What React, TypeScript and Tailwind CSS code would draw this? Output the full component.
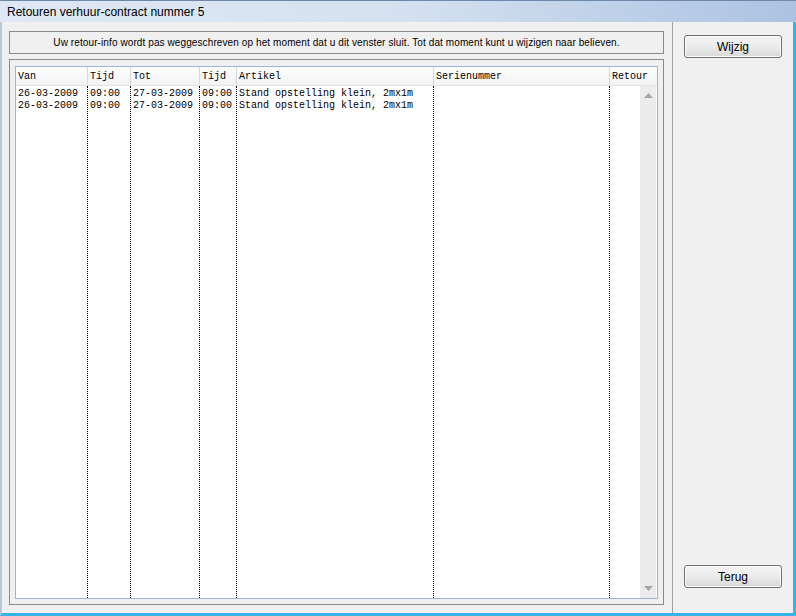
const rows = [
  { van: '26-03-2009', tijd: '09:00', tot: '27-03-2009', tijd2: '09:00', artikel: 'Stand opstelling klein, 2mx1m', serie: '', retour: '' },
  { van: '26-03-2009', tijd: '09:00', tot: '27-03-2009', tijd2: '09:00', artikel: 'Stand opstelling klein, 2mx1m', serie: '', retour: '' },
];

const cols = [
  { key: 'van', label: 'Van', w: 'w-[72px]' },
  { key: 'tijd', label: 'Tijd', w: 'w-[43px]' },
  { key: 'tot', label: 'Tot', w: 'w-[69px]' },
  { key: 'tijd2', label: 'Tijd', w: 'w-[37px]' },
  { key: 'artikel', label: 'Artikel', w: 'w-[197px]' },
  { key: 'serie', label: 'Serienummer', w: 'w-[176px]' },
] as const;

const mono = { fontFamily: '"Liberation Mono", monospace' };

function Button({ label }: { label: string }) {
  return (
    <button className="w-[98px] h-[23px] rounded-[3px] border border-[#707070] bg-gradient-to-b from-[#f4f4f4] via-[#ebebeb] to-[#d8d8d8] text-[12px] text-black shadow-[inset_0_0_0_1px_#fcfcfc]">
      {label}
    </button>
  );
}

export default function App() {
  return (
    <div className="w-[796px] h-[616px] flex flex-col bg-[#f0f0f0] overflow-hidden" style={{ fontFamily: '"Liberation Sans", Arial, sans-serif' }}>
      <div className="h-[22px] shrink-0 flex items-center pl-[7px] bg-gradient-to-r from-[#dfe8f4] via-[#d5e1f0] to-[#abc3e2] border-t border-[#6d88a8] text-[12px] text-black">
        Retouren verhuur-contract nummer 5
      </div>
      <div className="flex-1 flex border-l-2 border-l-[#b7c7dc] border-r-[3px] border-r-[#36b5e5] border-b-[3px] border-b-[#36b5e5] min-h-0">
        <div className="w-[670px] flex flex-col pt-[9px] pb-[8px] pl-[7px] pr-[8px]">
          <div className="h-[23px] shrink-0 border border-[#8a8a8a] flex items-center justify-center text-[10px] text-black tracking-[0.1px]">
            Uw retour-info wordt pas weggeschreven op het moment dat u dit venster sluit. Tot dat moment kunt u wijzigen naar believen.
          </div>
          <div className="mt-[5px] flex-1 border border-[#8a8a8a] p-[5px] pt-[6px] flex min-h-0">
            <div className="flex-1 border border-[#99b4e1] bg-white flex flex-col text-[10px] text-black min-h-0" style={mono}>
              <div className="h-[19px] shrink-0 flex bg-gradient-to-b from-white to-[#f1f2f4] border-b border-[#e3e3e3]">
                {cols.map((c) => (
                  <div key={c.key} className={`${c.w} shrink-0 border-r border-[#d8d8d8] pl-[2px] flex items-center`}>
                    {c.label}
                  </div>
                ))}
                <div className="flex-1 pl-[2px] flex items-center">Retour</div>
              </div>
              <div className="flex-1 flex min-h-0">
                {cols.map((c) => (
                  <div key={c.key} className={`${c.w} shrink-0 border-r border-dotted border-black pl-[2px] pt-[2px] leading-[12px] whitespace-pre overflow-hidden`}>
                    {rows.map((r, i) => (
                      <div key={i} className="h-[12px]">{r[c.key]}</div>
                    ))}
                  </div>
                ))}
                <div className="w-[30px] shrink-0" />
                <div className="w-[16px] shrink-0 bg-[#ececec] flex flex-col justify-between items-center py-[7px]">
                  <svg width="9" height="5" viewBox="0 0 9 5"><path d="M0 5 L4.5 0 L9 5 Z" fill="#a5a5a5" /></svg>
                  <svg width="9" height="5" viewBox="0 0 9 5"><path d="M0 0 L4.5 5 L9 0 Z" fill="#a5a5a5" /></svg>
                </div>
              </div>
            </div>
          </div>
        </div>
        <div className="w-px bg-[#a0a0a0]" />
        <div className="flex-1 flex flex-col justify-between pt-[13px] pb-[25px] pl-[11px]">
          <Button label="Wijzig" />
          <Button label="Terug" />
        </div>
      </div>
    </div>
  );
}
